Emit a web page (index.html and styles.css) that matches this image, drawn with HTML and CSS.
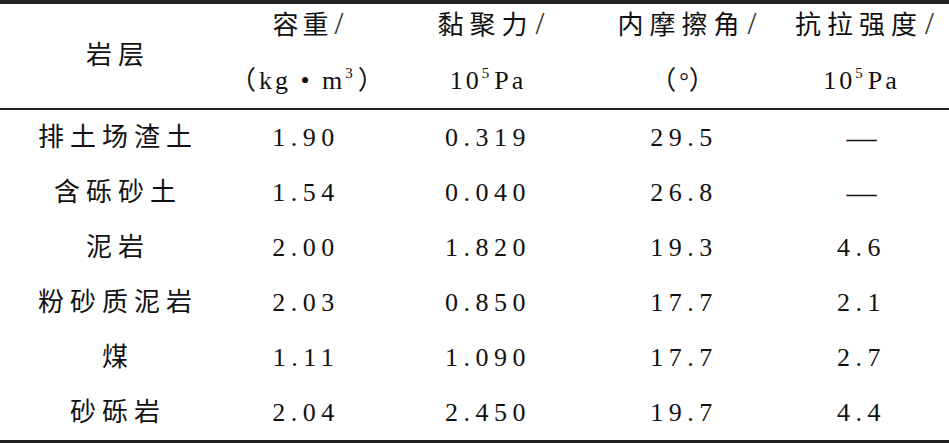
FILE: index.html
```html
<!DOCTYPE html>
<html lang="zh-CN">
<head>
    <meta charset="UTF-8">
    <meta name="viewport" content="width=device-width, initial-scale=1.0">
    <title>岩层物理力学参数</title>
    <link rel="stylesheet" href="styles.css">
</head>
<body>
    <table class="rock-table">
        <colgroup>
            <col class="c-layer">
            <col class="c-density">
            <col class="c-cohesion">
            <col class="c-angle">
            <col class="c-tensile">
        </colgroup>
        <thead>
            <tr class="head-top">
                <th rowspan="2" class="cjk">岩层</th>
                <th class="cjk tight">容重<span class="slash">/</span></th>
                <th class="cjk">黏聚力<span class="slash">/</span></th>
                <th class="cjk">内摩擦角<span class="slash">/</span></th>
                <th class="cjk">抗拉强度<span class="slash">/</span></th>
            </tr>
            <tr class="head-unit">
                <th class="unit">（kg • m<sup>3</sup>）</th>
                <th class="unit">10<sup>5</sup>Pa</th>
                <th class="unit">（<span class="deg">°</span>）</th>
                <th class="unit">10<sup>5</sup>Pa</th>
            </tr>
        </thead>
        <tbody>
            <tr>
                <td class="cjk">排土场渣土</td>
                <td>1.90</td>
                <td>0.319</td>
                <td>29.5</td>
                <td class="dash">—</td>
            </tr>
            <tr>
                <td class="cjk">含砾砂土</td>
                <td>1.54</td>
                <td>0.040</td>
                <td>26.8</td>
                <td class="dash">—</td>
            </tr>
            <tr>
                <td class="cjk">泥岩</td>
                <td>2.00</td>
                <td>1.820</td>
                <td>19.3</td>
                <td>4.6</td>
            </tr>
            <tr>
                <td class="cjk">粉砂质泥岩</td>
                <td>2.03</td>
                <td>0.850</td>
                <td>17.7</td>
                <td>2.1</td>
            </tr>
            <tr>
                <td class="cjk">煤</td>
                <td>1.11</td>
                <td>1.090</td>
                <td>17.7</td>
                <td>2.7</td>
            </tr>
            <tr>
                <td class="cjk">砂砾岩</td>
                <td>2.04</td>
                <td>2.450</td>
                <td>19.7</td>
                <td>4.4</td>
            </tr>
        </tbody>
    </table>
</body>
</html>
```
FILE: styles.css
```css
body {
    margin: 0;
    background: #ffffff;
    font-family: "Liberation Serif", "Noto Sans CJK SC", serif;
    color: #111111;
}

.rock-table {
    width: 949px;
    border-collapse: collapse;
    table-layout: fixed;
    border-top: 4px solid #222222;
    border-bottom: 4px solid #222222;
}

.c-layer { width: 230px; }
.c-density { width: 152px; }
.c-cohesion { width: 212px; }
.c-angle { width: 180px; }
.c-tensile { width: 175px; }

th, td {
    padding: 0;
    text-align: center;
    font-weight: normal;
    font-size: 26px;
    line-height: 30px;
    letter-spacing: 5.5px;
    white-space: nowrap;
}

thead {
    border-bottom: 2px solid #222222;
}

.head-top th {
    height: 38px;
    vertical-align: top;
    padding-top: 4px;
}

.head-top th[rowspan] {
    vertical-align: middle;
    padding-top: 0;
}

.head-unit th {
    height: 54px;
    vertical-align: middle;
    padding-top: 8px;
}

th.cjk, td.cjk {
    font-size: 26px;
    letter-spacing: 6px;
    padding-left: 6px;
}

th.tight {
    letter-spacing: 4px;
    padding-left: 4px;
}

.slash {
    font-size: 32px;
    letter-spacing: 0;
    margin-left: 2px;
    color: #333333;
}

.unit {
    letter-spacing: 3px;
}

.deg {
    font-size: 24px;
    letter-spacing: 0;
}

sup {
    font-size: 15px;
    line-height: 0;
    vertical-align: 11px;
    letter-spacing: 0;
    margin-right: 5px;
}

tbody td {
    height: 55px;
    vertical-align: middle;
}

.dash {
    letter-spacing: 0;
    font-size: 30px;
}
```
